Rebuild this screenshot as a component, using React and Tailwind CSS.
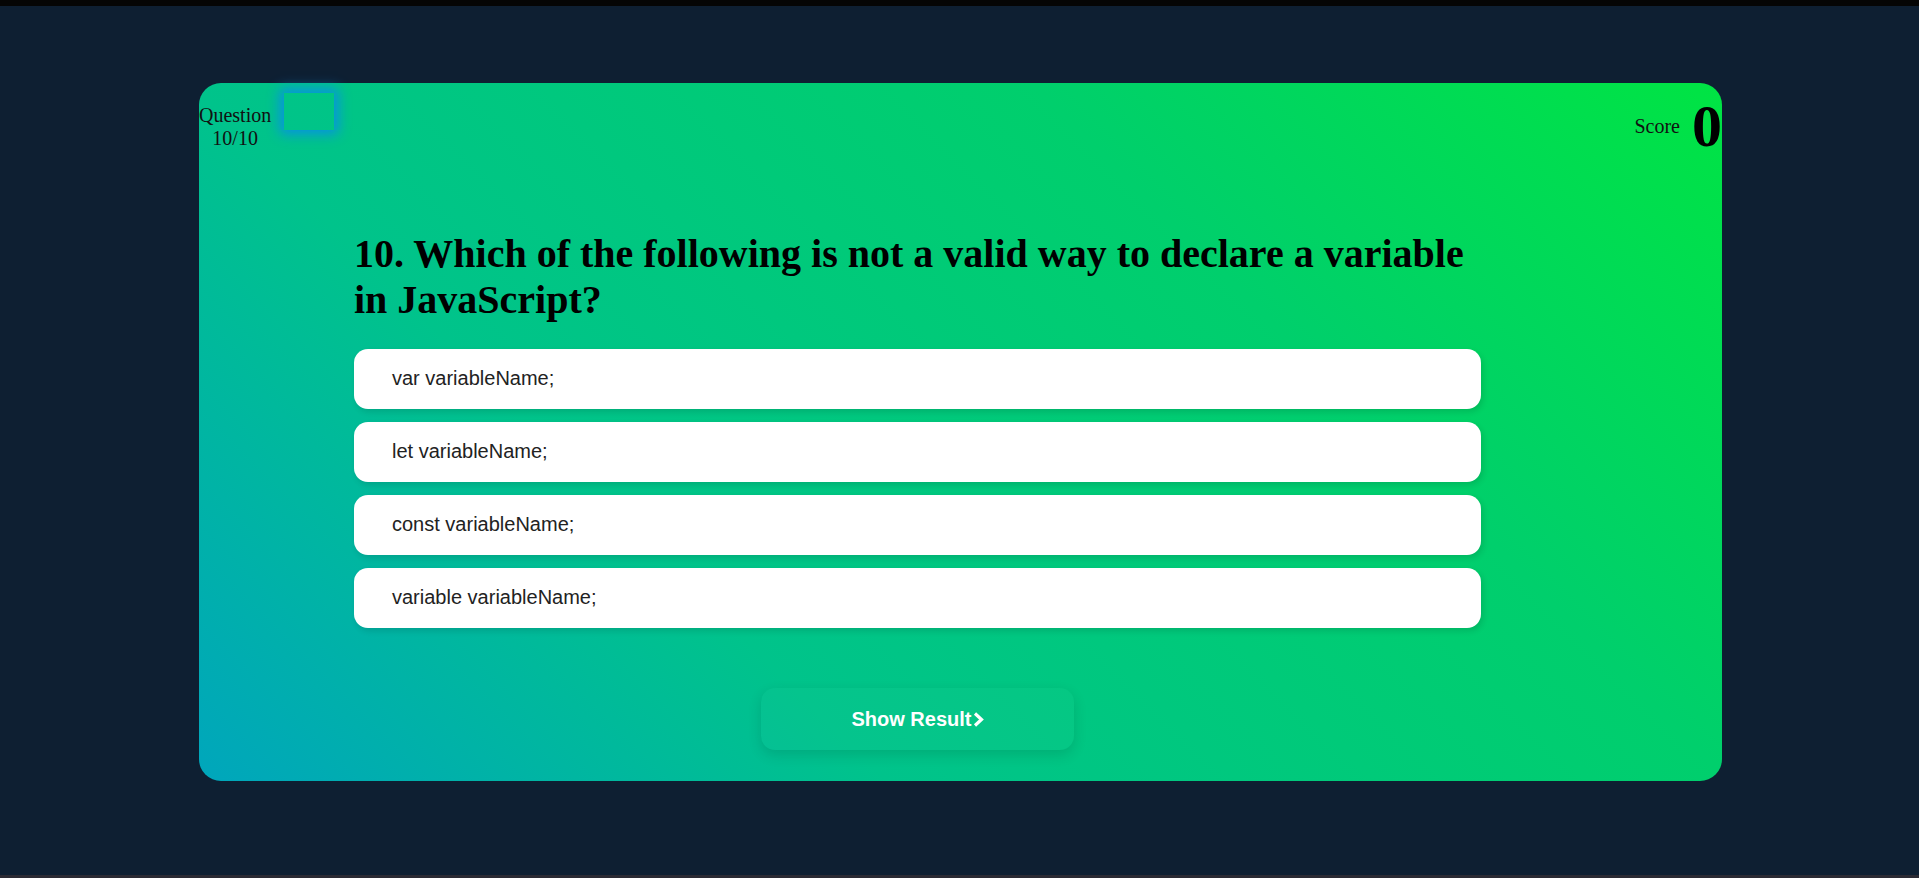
import React from "react";

const options = [
  "var variableName;",
  "let variableName;",
  "const variableName;",
  "variable variableName;",
];

export default function App() {
  return (
    <div className="h-[878px] w-full flex flex-col bg-[#0e1f32] font-['Liberation_Serif',serif] overflow-hidden">
      <div className="h-[6px] w-full bg-[#050505] shrink-0" />
      <div className="flex-1">
        <div className="ml-[199px] mt-[77px] w-[1523px] h-[698px] rounded-[22px] bg-[linear-gradient(45deg,#00a6bc_0%,#00c38b_31%,#00cf6c_69%,#00e443_100%)] flex flex-col">
          <div className="flex justify-between items-start pt-[9px] h-[78px]">
            <div className="flex items-start">
              <div className="mt-[12px] text-center text-[20px] leading-[23px] text-[#111]">
                <div>Question</div>
                <div>10/10</div>
              </div>
              <div className="ml-[13px] mt-[1px] w-[50px] h-[37px] shadow-[0_0_12px_4px_#0890e6]" />
            </div>
            <div className="flex items-center gap-[12px] text-[#111]">
              <span className="text-[20px] leading-[23px]">Score</span>
              <span className="text-[60px] leading-[69px] font-bold text-black">0</span>
            </div>
          </div>
          <div className="ml-[155px] mt-[70px] w-[1127px] flex flex-col">
            <h1 className="text-[40px] leading-[46px] font-bold text-black">
              10. Which of the following is not a valid way to declare a variable in JavaScript?
            </h1>
            <div className="mt-[26px] flex flex-col gap-[13px]">
              {options.map((o) => (
                <div
                  key={o}
                  className="h-[60px] rounded-[14px] bg-white pl-[38px] pb-[3px] flex items-center text-[20px] text-[#222] font-['Liberation_Sans',Arial,sans-serif] shadow-[2px_3px_6px_rgba(0,0,0,0.12)]"
                >
                  {o}
                </div>
              ))}
            </div>
            <button className="mt-[60px] mx-auto w-[313px] h-[62px] rounded-[14px] bg-white/[0.02] shadow-[0_5px_14px_rgba(0,0,0,0.12)] flex items-center justify-center text-white text-[20px] font-bold font-['Liberation_Sans',Arial,sans-serif]">
              <span>Show Result</span>
              <svg width="11" height="15" viewBox="0 0 11 15" className="ml-[1px]">
                <path d="M2 1.5 L8.5 7.5 L2 13.5" fill="none" stroke="white" strokeWidth="3.2" strokeLinejoin="miter" />
              </svg>
            </button>
          </div>
        </div>
      </div>
      <div className="h-[3px] w-full bg-[#2b2a33] shrink-0" />
    </div>
  );
}
